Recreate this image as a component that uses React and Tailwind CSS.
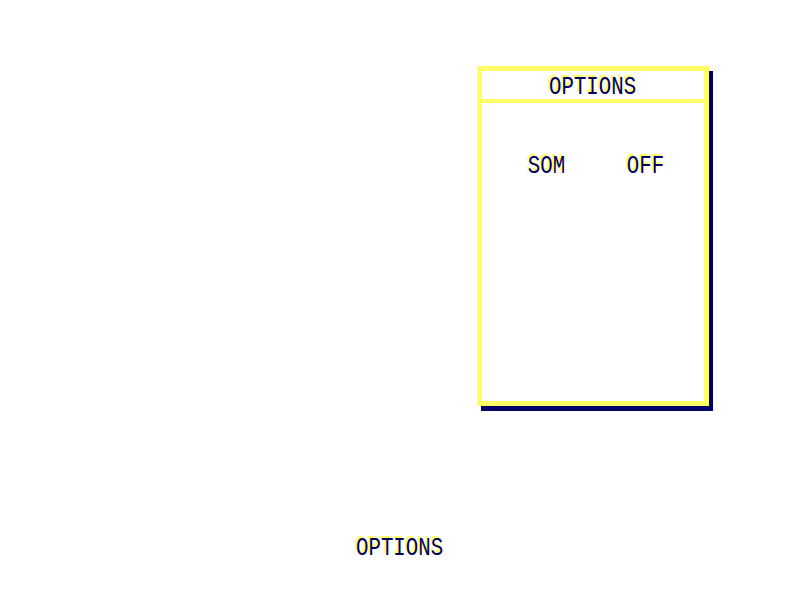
export default function App() {
  const textStyle = "inline-block scale-x-[0.8] text-[#000066] [text-shadow:-2px_-2px_0_#ffff66] [font-family:'Liberation_Mono','DejaVu_Sans_Mono',monospace] text-[26px] leading-none";

  return (
    <div className="w-[800px] h-[600px] bg-white flex flex-col">
      {/* Options panel */}
      <div className="ml-[477px] mt-[66px] w-[232px] h-[340px] border-[5px] border-[#ffff66] bg-white shadow-[4px_5px_0_#000066] flex flex-col">
        <div className="h-[32px] border-b-[4px] border-[#ffff66] flex items-center justify-center pt-[3px]">
          <span className={textStyle}>OPTIONS</span>
        </div>
        <div className="flex pt-[50px]">
          <div className="w-[128px] flex justify-center">
            <span className={textStyle}>SOM</span>
          </div>
          <div className="w-[70px] flex justify-center">
            <span className={textStyle}>OFF</span>
          </div>
        </div>
      </div>

      {/* Bottom label */}
      <div className="mt-[129px] flex justify-center">
        <span className={textStyle}>OPTIONS</span>
      </div>
    </div>
  );
}
